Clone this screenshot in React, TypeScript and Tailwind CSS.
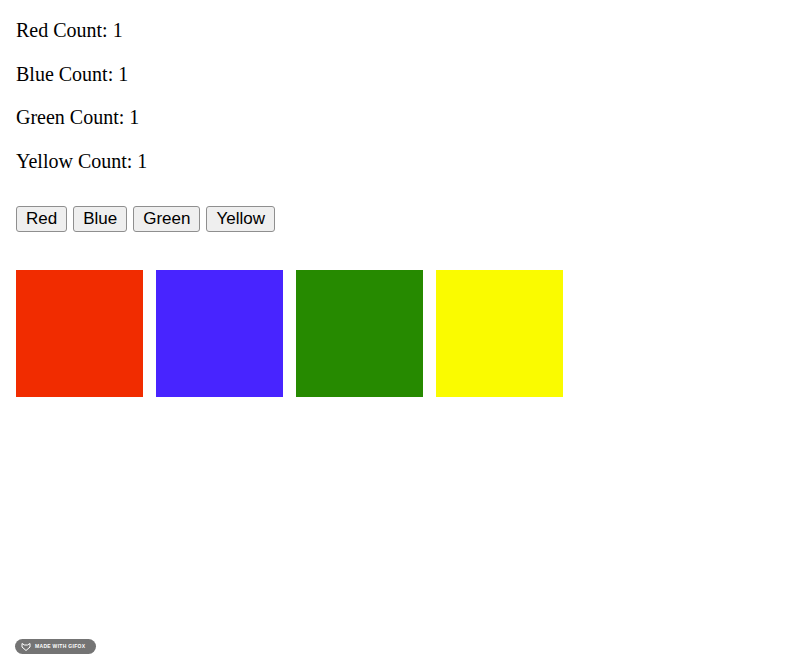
import React, { useState } from "react";

export default function App() {
  const [counts, setCounts] = useState({ Red: 1, Blue: 1, Green: 1, Yellow: 1 });
  const names = ["Red", "Blue", "Green", "Yellow"] as const;
  const inc = (n: (typeof names)[number]) => setCounts((c) => ({ ...c, [n]: c[n] + 1 }));
  return (
    <div className="relative h-[669px] w-[800px] bg-white px-4 pt-[19px]">
      <div className="flex flex-col gap-[20.5px] font-['Liberation_Serif',serif] text-[20px] leading-[23px] text-black">
        {names.map((n) => (
          <p key={n}>
            {n} Count: {counts[n]}
          </p>
        ))}
      </div>
      <div className="mt-[33.5px] flex gap-[6px]">
        {names.map((n) => (
          <button
            key={n}
            onClick={() => inc(n)}
            className="h-[26px] rounded-[3px] border border-[#8f8f8f] bg-[#efefef] px-[9px] font-['Liberation_Sans',Arial,sans-serif] text-[17px] leading-[20px] text-black"
          >
            {n}
          </button>
        ))}
      </div>
      <div className="mt-[38px] flex gap-[13px]">
        <div className="h-[127px] w-[127px] bg-[#f12c00]" />
        <div className="h-[127px] w-[127px] bg-[#4824ff]" />
        <div className="h-[127px] w-[127px] bg-[#268a00]" />
        <div className="h-[127px] w-[127px] bg-[#fafb00]" />
      </div>
      <div className="absolute left-[15px] top-[639px] flex h-[15px] w-[81px] items-center gap-[4px] rounded-full bg-[#747474] pl-[6px]">
        <svg width="10" height="8" viewBox="0 0 10 8">
          <path d="M1 0.5 L3.5 2 L6.5 2 L9 0.5 L9 4 L5 7.5 L1 4 Z" fill="none" stroke="#fff" strokeWidth="1" />
        </svg>
        <span className="font-['Liberation_Sans',Arial,sans-serif] text-[5px] font-bold leading-none tracking-[0.3px] text-white">
          MADE WITH GIFOX
        </span>
      </div>
    </div>
  );
}
